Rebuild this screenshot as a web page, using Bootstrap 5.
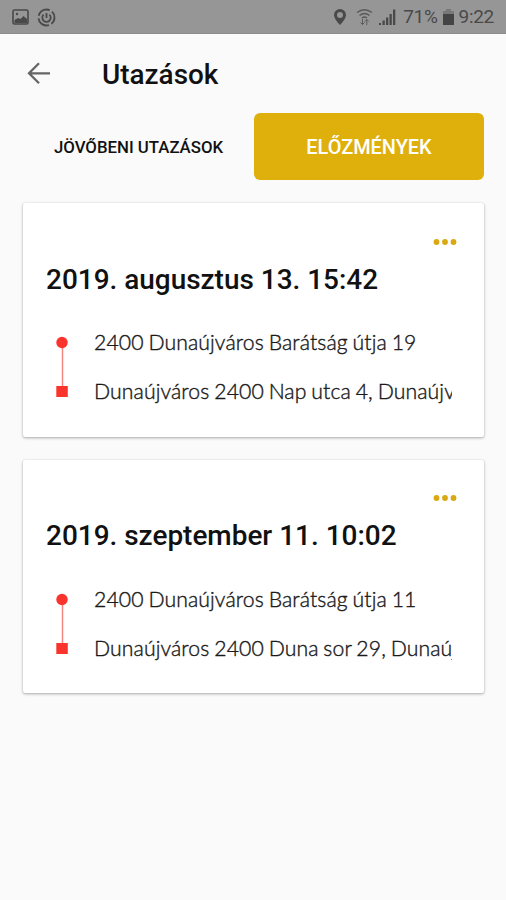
<!DOCTYPE html>
<html lang="hu">
<head>
<meta charset="utf-8">
<meta name="viewport" content="width=device-width, initial-scale=1">
<title>Utazások</title>
<link href="https://cdn.jsdelivr.net/npm/bootstrap@5.3.0/dist/css/bootstrap.min.css" rel="stylesheet">
<style>
body{background:#fafafa;font-family:Roboto,"Liberation Sans",sans-serif;color:#111;overflow:hidden}
.screen{width:506px;height:900px}
.statusbar{height:34px;background:#969696;color:#494949;padding:1px 12px 0;border-bottom:1px solid #8c8c8c;font-size:19px;line-height:34px;letter-spacing:-.3px}
.topbar{height:79px;padding:0 27px}
.page-title{font-size:27.9px;font-weight:500;line-height:32px;margin:2px 0 0 51px}
.trip-tabs{height:67px;padding:0 22px 0 24px}
.tab-plain{width:230px;font-size:16.8px;font-weight:500;color:#111;padding:2px 1px 0 0;border:0}
.tab-active{width:230px;height:67px;background:#dfb00c;color:#fff;font-size:19.9px;font-weight:500;border:0;border-radius:6px;padding:3px 0 0}
.tab-active:hover{background:#dfb00c;color:#fff}
.trips{padding:23px 22px 0 23px;gap:23px}
.trip{height:233.5px;border:0;border-radius:2px;background:#fff;box-shadow:0 1px 3px rgba(0,0,0,.32),0 0 1px rgba(0,0,0,.15)}
.trip-body{padding:34px 27px 0 23px}
.trip + .trip .trip-body{padding-top:33px}
.more{height:10px;padding:0;border:0;background:none}
.trip-date{font-size:27.95px;font-weight:500;line-height:34px;margin:16px 0 0;white-space:nowrap}
.route{margin-top:21px;padding-left:9px}
.trip + .trip .route{margin-top:22px}
.route-mark{width:14px;height:98px}
.stops{margin-left:25px;width:358px;font-family:Lato,"Open Sans",sans-serif;font-size:21.2px;line-height:48px;font-weight:300;letter-spacing:.11px;word-spacing:-1.05px;-webkit-text-stroke:.4px #1a1a1a;color:#1a1a1a}
.stops div{height:49px;overflow:hidden;white-space:nowrap}
</style>
<script src="https://cdn.jsdelivr.net/npm/bootstrap@5.3.0/dist/js/bootstrap.bundle.min.js"></script>
</head>
<body>
<div class="screen d-flex flex-column">
  <div class="statusbar d-flex align-items-center justify-content-between">
    <div class="d-flex align-items-center gap-2">
      <svg width="17" height="16" viewBox="0 0 17 16"><rect x="1" y="1" width="15" height="14" rx="1.5" fill="none" stroke="#494949" stroke-width="1.6"/><path d="M2.500 11l3.500-2 2.500 1 3-3 3.500 3v4h-12.500z" fill="#494949"/><circle cx="5" cy="5" r="1.2" fill="#494949"/></svg>
      <svg width="19" height="19" viewBox="0 0 19 19" fill="none" stroke="#494949"><circle cx="9.500" cy="9.500" r="8" stroke-width="1.8" stroke-dasharray="14 2.750" stroke-dashoffset="-10"/><path d="M6.600 6.600a4.200 4.200 0 1 0 5.800 0M9.500 5v5" stroke-width="1.8"/></svg>
    </div>
    <div class="d-flex align-items-center">
      <svg width="70" height="20" viewBox="6 0 70 20" fill="#494949"><path fill-rule="evenodd" d="M13 2a6 6 0 0 0-6 6c0 4 6 10 6 10s6-6 6-10a6 6 0 0 0-6-6zm0 3a3 3 0 1 1 0 6 3 3 0 0 1 0-6z"/><g fill="none" stroke="#5a5a5a" stroke-width="1.500"><path d="M30 5.500q7.500-5.500 15 0M32.500 8.500q5-3.800 10 0M35 11q2.500-2 5 0"/><path d="M35.500 12v5.500M33.500 15.500l2 2 2-2M39.800 18v-5.500M37.800 14.500l2-2 2 2" stroke-width="1"/></g><path d="M52 16h2v2h-2zM55.500 13.500h2.300V18h-2.300zM59 10.500h2.300V18H59zM62.500 7h2.300v11h-2.300zM66 2.500h2.300V18H66z"/></svg>
      <span class="battery-pct">71%</span>
      <svg class="mx-1" width="13" height="18" viewBox="0 0 13 18"><path d="M4 1h5v2h3v4H1V3h3z" fill="#787878"/><path d="M1 6h11v11H1z" fill="#444"/></svg>
      <span>9:22</span>
    </div>
  </div>
  <header class="topbar d-flex align-items-center">
    <svg width="24" height="24" viewBox="0 0 24 24" fill="none" stroke="#666" stroke-width="2.300"><path d="M23 11.300H2.500M12 1.300L2 11.300l10 10"/></svg>
    <h1 class="page-title">Utazások</h1>
  </header>
  <nav class="trip-tabs d-flex align-items-center">
    <button class="btn tab-plain" type="button">JÖVŐBENI UTAZÁSOK</button>
    <button class="btn tab-active" type="button">ELŐZMÉNYEK</button>
  </nav>
  <main class="trips d-flex flex-column">
    <article class="card trip"><div class="trip-body">
      <div class="d-flex justify-content-end"><button class="more d-flex" type="button" aria-label="Továbbiak"><svg width="24" height="10" viewBox="0 0 24 10" fill="#d9a812"><circle cx="3.500" cy="5" r="2.900"/><circle cx="12" cy="5" r="2.900"/><circle cx="20.500" cy="5" r="2.900"/></svg></button></div>
      <h2 class="trip-date">2019. augusztus 13. 15:42</h2>
      <div class="route d-flex">
        <svg class="route-mark" viewBox="0 0 14 98" fill="#f9342c"><path d="M7.500 24v49" stroke="#f58580" stroke-width="1.500"/><circle cx="7" cy="24.500" r="5.700"/><path d="M1.300 68h11.500v11H1.300z"/></svg>
        <div class="stops"><div>2400 Dunaújváros Barátság útja 19</div><div>Dunaújváros 2400 Nap utca 4, Dunaújv</div></div>
      </div>
    </div></article>
    <article class="card trip"><div class="trip-body">
      <div class="d-flex justify-content-end"><button class="more d-flex" type="button" aria-label="Továbbiak"><svg width="24" height="10" viewBox="0 0 24 10" fill="#d9a812"><circle cx="3.500" cy="5" r="2.900"/><circle cx="12" cy="5" r="2.900"/><circle cx="20.500" cy="5" r="2.900"/></svg></button></div>
      <h2 class="trip-date">2019. szeptember 11. 10:02</h2>
      <div class="route d-flex">
        <svg class="route-mark" viewBox="0 0 14 98" fill="#f9342c"><path d="M7.500 24v49" stroke="#f58580" stroke-width="1.500"/><circle cx="7" cy="24.500" r="5.700"/><path d="M1.300 68h11.500v11H1.300z"/></svg>
        <div class="stops"><div>2400 Dunaújváros Barátság útja 11</div><div>Dunaújváros 2400 Duna sor 29, Dunaúj</div></div>
      </div>
    </div></article>
  </main>
</div>
</body>
</html>
